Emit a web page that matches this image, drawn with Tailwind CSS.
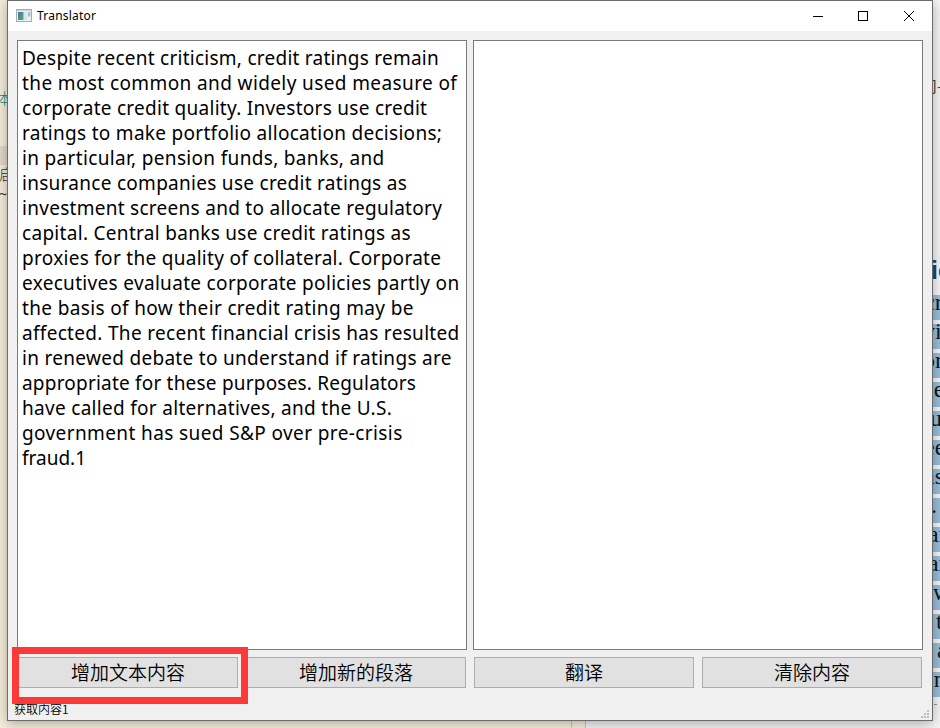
<!DOCTYPE html>
<html lang="zh">
<head>
<meta charset="utf-8">
<title>Translator</title>
<script src="https://cdn.jsdelivr.net/npm/@tailwindcss/browser@4"></script>
</head>
<body class="relative w-[940px] h-[728px] overflow-hidden bg-[#f6eedb] font-['Noto_Sans','Noto_Sans_CJK_SC',sans-serif] text-black">
<!-- Desktop behind the window -->
<div class="absolute inset-0 flex overflow-hidden">
  <div class="relative w-[586px] bg-[#f6eedb] border-r border-[#c9c1b0]">
    <div class="absolute left-[571px] top-0 h-full w-px bg-[#cbc3b3]"></div>
    <div class="absolute left-0 top-[146px] w-[8px] h-[19px] bg-[#e2dac9]"></div>
    <div class="absolute left-[-3px] top-[88px] text-[15px] leading-[20px] font-light text-[#168d83]">本</div>
    <div class="absolute left-[-1px] top-[164px] text-[15px] leading-[20px] font-light text-[#333] font-['Noto_Sans_CJK_SC',sans-serif]">启</div>
    <div class="absolute left-[-1px] top-[184px] text-[14px] leading-[20px] text-[#333]">~</div>
  </div>
  <div class="relative flex-1 bg-[#f3f3f3]"></div>
</div>
<div class="absolute left-[933px] top-0 w-[7px] h-[728px] overflow-hidden bg-[#f6f6f6] font-['Liberation_Serif',serif] text-[24px] leading-[25px] text-[#111820]">
  <div class="absolute left-[-11px] top-[73px] text-[15px] font-['Noto_Sans_CJK_SC',sans-serif] text-[#444] whitespace-nowrap">司-</div>
  <div class="absolute left-[-2px] top-[258px] font-['Liberation_Sans',sans-serif] font-bold text-[25px] text-[#24427d]">ic</div>
  <div class="absolute left-0 top-[295px] w-full flex flex-col gap-[4px]">
    <div class="h-[25px] bg-[#98bfda]"><p class="-ml-[9px] -mt-[5px]">cr</p></div>
    <div class="h-[25px] bg-[#98bfda]"><p class="-ml-[10px] -mt-[5px]">vi</p></div>
    <div class="h-[25px] bg-[#98bfda]"><p class="-ml-[10px] -mt-[5px]">or</p></div>
    <div class="h-[25px] bg-[#98bfda]"><p class="-ml-[6px] -mt-[5px]">le</p></div>
    <div class="h-[25px] bg-[#98bfda]"><p class="-ml-[3px] -mt-[5px]">u</p></div>
    <div class="h-[25px] bg-[#98bfda]"><p class="-ml-[9px] -mt-[5px]">ee</p></div>
    <div class="h-[25px] bg-[#98bfda]"><p class="-ml-[9px] -mt-[5px]">as</p></div>
    <div class="h-[25px] bg-[#98bfda]"><p class="-ml-[2px] -mt-[5px]">.</p></div>
    <div class="h-[25px] bg-[#98bfda]"><p class="-ml-[5px] -mt-[5px]">ar</p></div>
    <div class="h-[25px] bg-[#98bfda]"><p class="-ml-[5px] -mt-[5px]">ar</p></div>
    <div class="h-[25px] bg-[#98bfda]"><p class="ml-0 -mt-[5px]">w</p></div>
    <div class="h-[25px] bg-[#98bfda]"><p class="ml-[3px] -mt-[5px]">t</p></div>
    <div class="h-[25px] bg-[#98bfda]"><p class="ml-[4px] -mt-[5px]">a</p></div>
    <div class="h-[25px] bg-[#98bfda]"><p class="-ml-[6px] -mt-[5px]">in</p></div>
  </div>
  <div class="absolute left-[1px] top-[704px] w-[3px] h-px bg-[#999]"></div>
</div>

<!-- Window -->
<div class="absolute left-[7px] top-0 w-[926px] h-[721px] border border-[#6b6b6b] bg-[#f0f0f0] flex flex-col shadow-[0_2px_12px_rgba(0,0,0,0.32)]">
  <header class="h-[30px] shrink-0 bg-white flex items-center pl-[8px]">
    <svg class="w-[16px] h-[14px]" viewBox="0 0 16 14">
      <defs><linearGradient id="g" x1="0" y1="0" x2="1" y2="1"><stop offset="0" stop-color="#4474a4"/><stop offset="1" stop-color="#55ad76"/></linearGradient></defs>
      <rect x=".5" y=".5" width="15" height="12" fill="#f0f1f3" stroke="#a7adb3"/>
      <path d="M1 1.500h14" stroke="#cbd1d7"/>
      <rect x="2" y="3" width="5.500" height="8" fill="url(#g)"/>
      <rect x="8" y="3" width="3.500" height="8" fill="#e1e3e5"/>
      <rect x="12" y="3" width="2.500" height="4.500" fill="#a3c4cf"/>
    </svg>
    <h1 class="ml-[5px] text-[12px] leading-[16px] tracking-[0.22px]">Translator</h1>
    <svg class="ml-auto mr-[17px] w-[102px] h-[11px]" viewBox="0 0 102 11" fill="none" stroke="#000" shape-rendering="crispEdges">
      <path d="M0 5.500h10"/><rect x="45.500" y=".5" width="9" height="9"/>
      <path d="M91 0l10 10M101 0L91 10" shape-rendering="auto"/>
    </svg>
  </header>
  <main class="pl-[9px] pt-[9px] flex flex-col">
    <div class="flex gap-[6px]">
      <div class="w-[450px] h-[610px] bg-white border border-[#7a7a7a] pl-[4px] pt-[5px] text-[19px] leading-[25px] whitespace-nowrap">
        <p class="tracking-[0.25px]">Despite recent criticism, credit ratings remain</p>
        <p class="tracking-[0.39px]">the most common and widely used measure of</p>
        <p class="tracking-[0.27px]">corporate credit quality. Investors use credit</p>
        <p class="tracking-[0.29px]">ratings to make portfolio allocation decisions;</p>
        <p class="tracking-[0.33px]">in particular, pension funds, banks, and</p>
        <p class="tracking-[0.28px]">insurance companies use credit ratings as</p>
        <p class="tracking-[0.28px]">investment screens and to allocate regulatory</p>
        <p class="tracking-[0.3px]">capital. Central banks use credit ratings as</p>
        <p class="tracking-[0.29px]">proxies for the quality of collateral. Corporate</p>
        <p class="tracking-[0.32px]">executives evaluate corporate policies partly on</p>
        <p class="tracking-[0.35px]">the basis of how their credit rating may be</p>
        <p class="tracking-[0.31px]">affected. The recent financial crisis has resulted</p>
        <p class="tracking-[0.3px]">in renewed debate to understand if ratings are</p>
        <p class="tracking-[0.2px]">appropriate for these purposes. Regulators</p>
        <p class="tracking-[0.3px]">have called for alternatives, and the U.S.</p>
        <p class="tracking-[0.39px]">government has sued S&amp;P over pre-crisis</p>
        <p class="tracking-[0px]">fraud.1</p>
      </div>
      <div class="w-[450px] h-[610px] bg-white border border-[#7a7a7a]"></div>
    </div>
    <div class="mt-[7px] ml-[1px] flex gap-[8px] text-[19px] font-['Noto_Sans_CJK_SC',sans-serif] font-[350]">
      <button class="w-[220px] h-[31px] border border-[#adadad] bg-[#e1e1e1] leading-[27px] pb-[2px]">增加文本内容</button>
      <button class="w-[220px] h-[31px] border border-[#adadad] bg-[#e1e1e1] leading-[27px] pb-[2px]">增加新的段落</button>
      <button class="w-[220px] h-[31px] border border-[#adadad] bg-[#e1e1e1] leading-[27px] pb-[2px]">翻译</button>
      <button class="w-[220px] h-[31px] border border-[#adadad] bg-[#e1e1e1] leading-[27px] pb-[2px]">清除内容</button>
    </div>
  </main>
  <footer class="mt-auto h-[20px] flex items-end justify-between pl-[6px] pr-[3px] pb-[2px] text-[12px] leading-[16px] font-['Noto_Sans_CJK_SC',sans-serif] font-[350]">
    <span class="mb-px">获取内容1</span>
    <svg class="w-[8px] h-[8px]" viewBox="0 0 8 8" fill="#bfbfbf"><path d="M6 0h2v2H6zM3 3h2v2H3zM6 3h2v2H6zM0 6h2v2H0zM3 6h2v2H3zM6 6h2v2H6z"/></svg>
  </footer>
</div>
<!-- Highlight around the first button -->
<div class="absolute left-[12px] top-[647px] w-[236px] h-[57px] border-[7px] border-[#fd3838]"></div>
</body>
</html>
